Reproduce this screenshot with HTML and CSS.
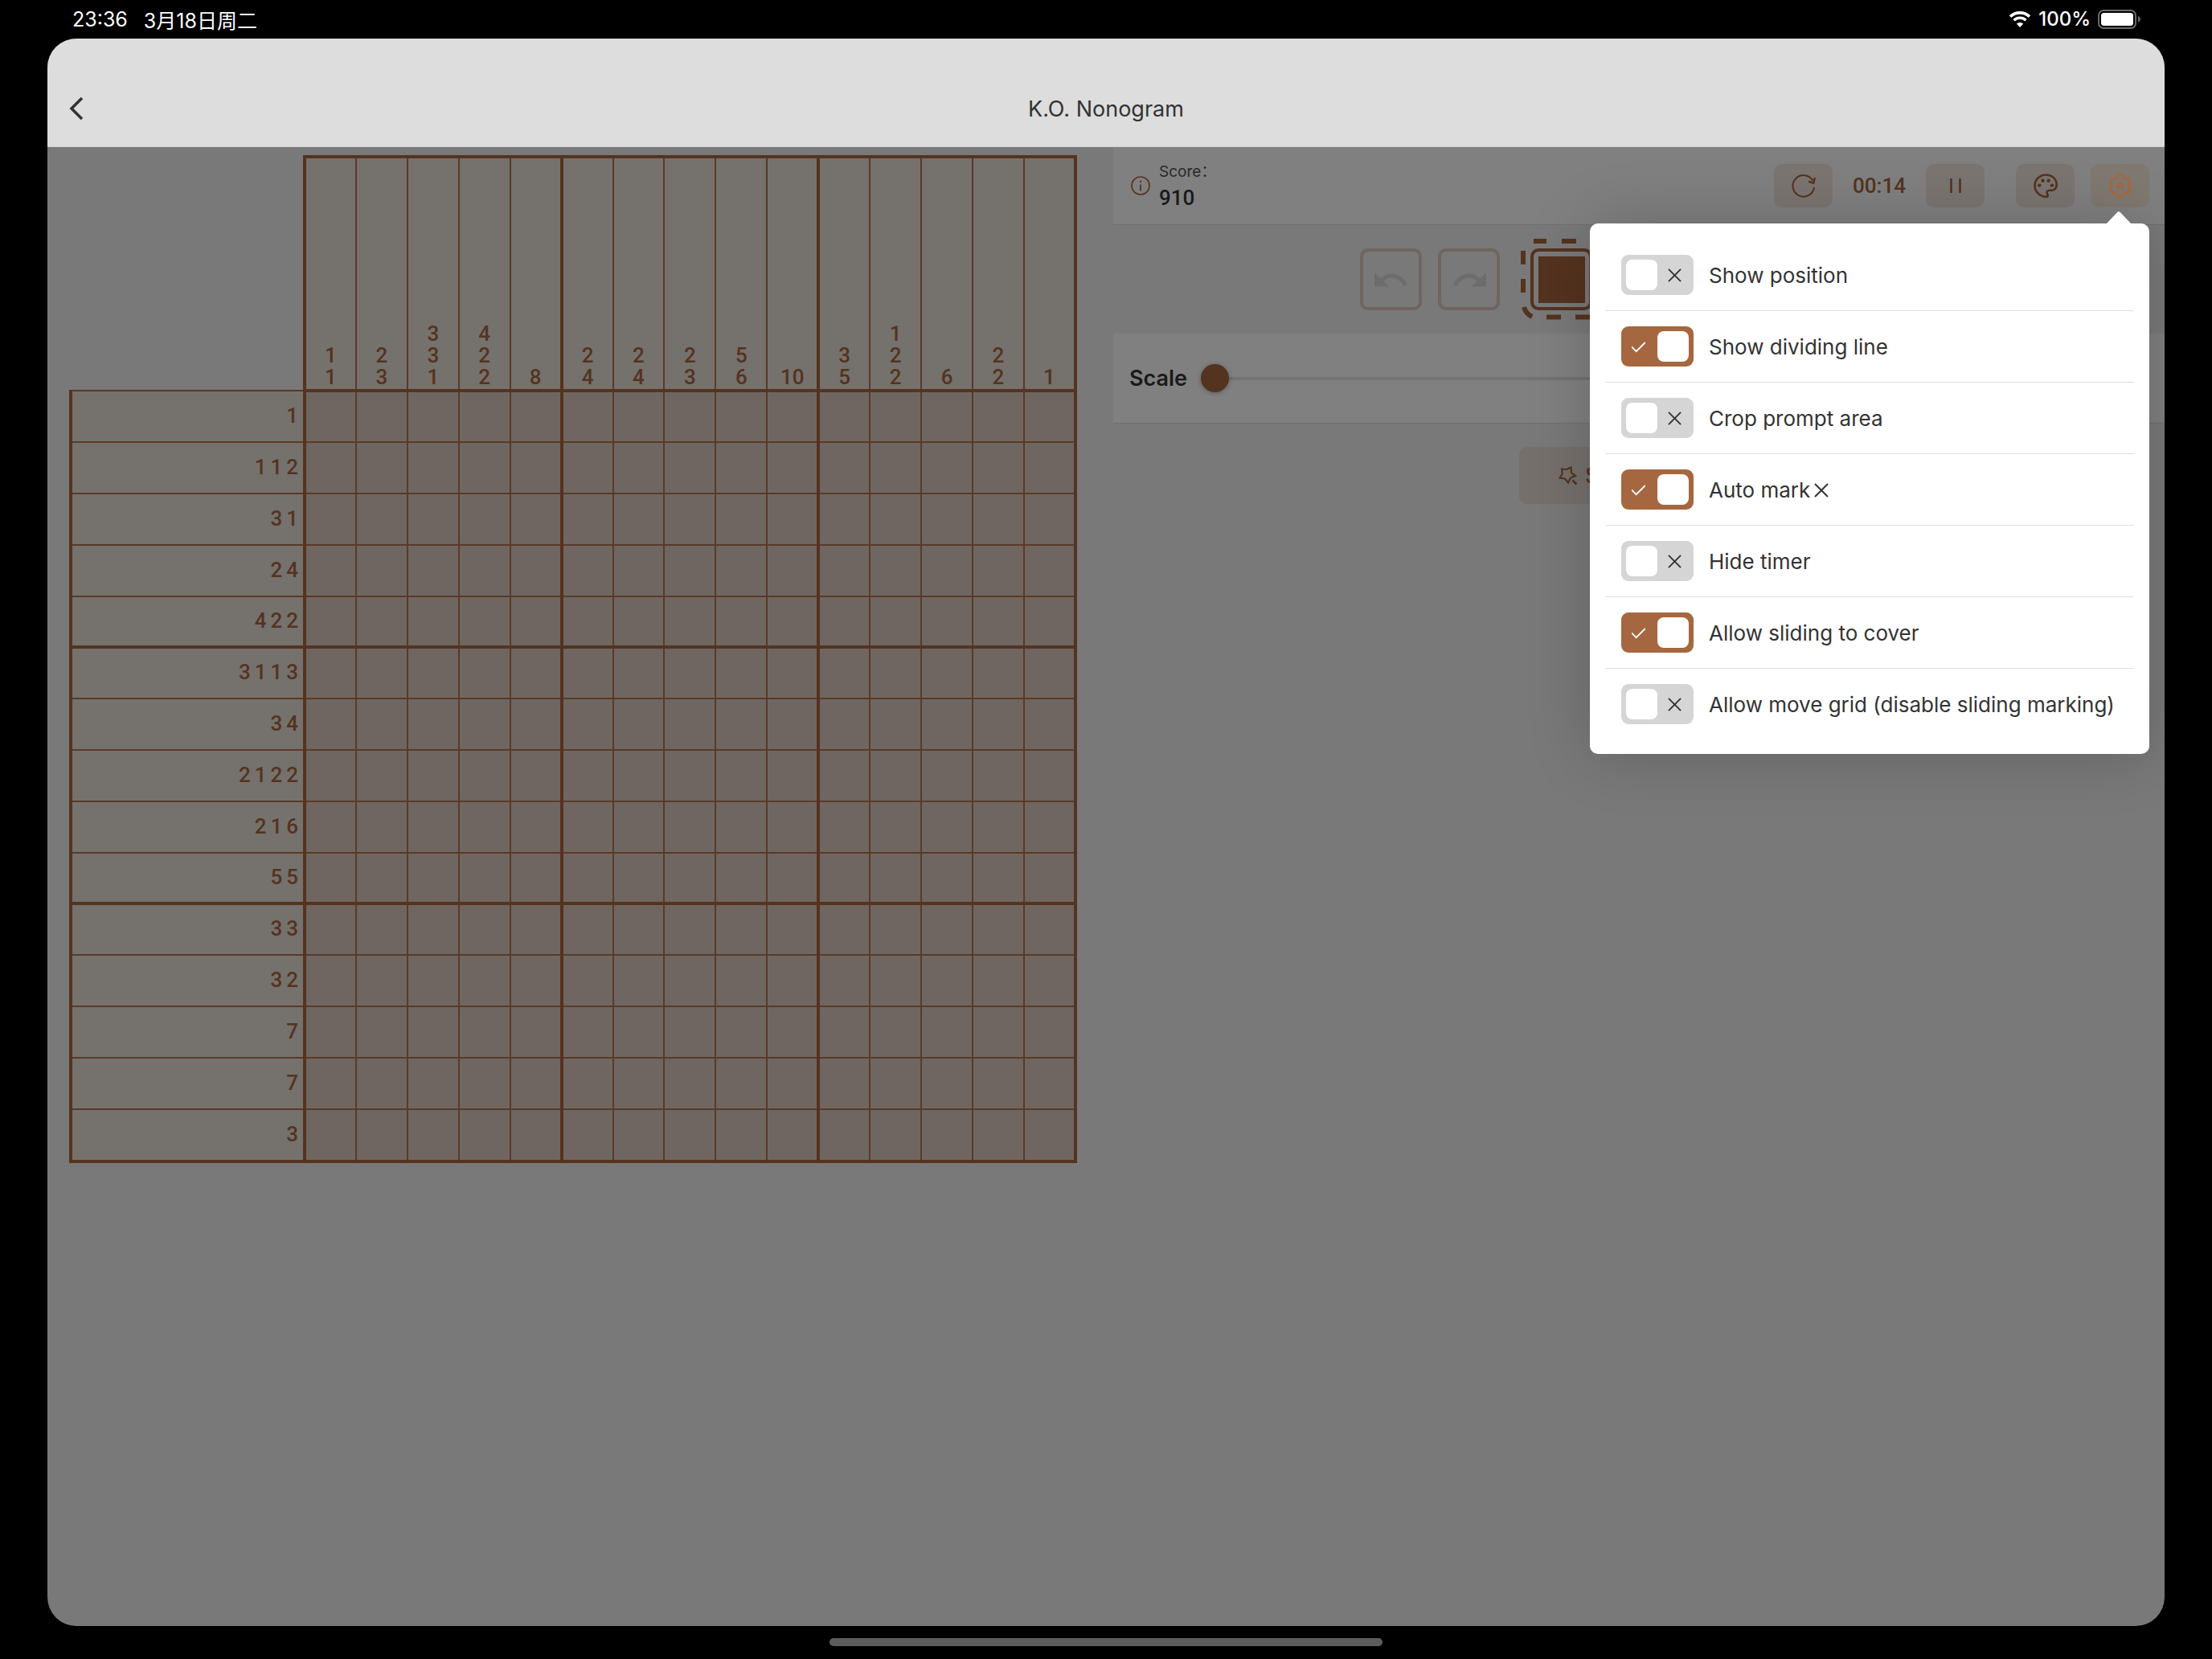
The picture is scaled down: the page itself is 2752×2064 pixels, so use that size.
FILE: index.html
```html
<!DOCTYPE html>
<html lang="en">
<head>
<meta charset="utf-8">
<meta name="viewport" content="width=device-width, initial-scale=1">
<title>K.O. Nonogram</title>
<link rel="stylesheet" href="styles.css">
</head>
<body>
<div class="status-bar">
  <div class="status-group status-time"><span>23:36</span><span>3月18日周二</span></div>
  <div class="status-group">
    <svg class="wifi" viewBox="0 0 28 20" aria-hidden="true">
      <path d="M2 6.600A17.500 17.500 0 0 1 26 6.600" fill="none" stroke="#fff" stroke-width="3.600"/>
      <path d="M6.500 11.200A11 11 0 0 1 21.500 11.200" fill="none" stroke="#fff" stroke-width="3.600"/>
      <path d="M14 20L9.800 15.600A6 6 0 0 1 18.200 15.600Z" fill="#fff"/>
    </svg>
    <span>100%</span>
    <svg class="battery" viewBox="0 0 54 24" aria-hidden="true">
      <rect x="1" y="1" width="46" height="22" rx="6" fill="none" stroke="#6b6b6b" stroke-width="2"/>
      <rect x="4" y="4" width="40" height="16" rx="3.500" fill="#fff"/>
      <path d="M50 8Q53 9.500 53 12Q53 14.500 50 16Z" fill="#6b6b6b"/>
    </svg>
  </div>
</div>

<div class="app">
  <header class="nav">
    <button class="back" type="button" aria-label="Back">
      <svg viewBox="0 0 20 30" aria-hidden="true"><path d="M17 2L4 15L17 28" fill="none" stroke="#333" stroke-width="3.600"/></svg>
    </button>
    <h1 class="title">K.O. Nonogram</h1>
  </header>

  <main class="content">
    <section class="board-pane">
      <table class="board" id="board" aria-label="Puzzle"></table>
    </section>

    <section class="side">
      <div class="score-bar">
        <svg class="info" viewBox="0 0 24 24" aria-hidden="true" fill="none" stroke="#573620" stroke-width="1.700"><circle cx="12" cy="12" r="11"/><path d="M12 10.500V18.500" stroke-width="1.800"/><path d="M12 5.800V8" stroke-width="2"/></svg>
        <div class="score"><span class="score-label">Score：</span><span class="score-value">910</span></div>
        <button class="tool" type="button" aria-label="Restart">
          <svg viewBox="0 0 32 32" aria-hidden="true" fill="none" stroke="#54331f" stroke-width="2"><path d="M29 18A13.300 13.300 0 1 1 27.500 10"/><path d="M30 6L28.300 12.700L22 10.800" stroke-width="2.400"/></svg>
        </button>
        <span class="timer">00:14</span>
        <button class="tool" type="button" aria-label="Pause">
          <svg viewBox="0 0 32 32" aria-hidden="true" fill="none" stroke="#54331f" stroke-width="2.600"><path d="M10.500 7V25M21.500 7V25"/></svg>
        </button>
        <button class="tool tool-palette" type="button" aria-label="Theme">
          <svg viewBox="0 0 32 32" aria-hidden="true"><path d="M18.300 29.600C10 30.600 2.500 24 2.500 16C2.500 8.500 8.800 2.500 16.300 2.500C23.500 2.500 29.700 7.500 29.700 14.500C29.700 20 26 22.300 22 21.800C18.500 21.600 16.600 23.500 18 26C18.800 27.500 19 28.800 18.300 29.600Z" fill="none" stroke="#54331f" stroke-width="2.600"/><g fill="#54331f"><circle cx="8.300" cy="15.600" r="2.200"/><circle cx="12.500" cy="9.700" r="2.200"/><circle cx="19.600" cy="9.700" r="2.200"/><circle cx="24" cy="15.600" r="2.200"/></g></svg>
        </button>
        <div class="settings">
          <button class="tool tool-active" type="button" aria-label="Settings" aria-expanded="true">
            <svg viewBox="0 0 32 32" aria-hidden="true" fill="none" stroke="#a8683f" stroke-width="2.600" stroke-linejoin="round"><path d="M13 2.800H19Q19.600 6.300 21.100 7.200Q22.500 8 25.700 6.900L28.700 12.100Q26.200 14.300 26.200 16Q26.200 17.700 28.700 19.900L25.700 25.100Q22.500 24 21.100 24.800Q19.600 25.700 19 29.200H13Q12.400 25.700 10.900 24.800Q9.500 24 6.300 25.100L3.300 19.900Q5.800 17.700 5.800 16Q5.800 14.300 3.300 12.100L6.300 6.900Q9.500 8 10.900 7.200Q12.400 6.300 13 2.800Z"/><circle cx="16" cy="16" r="3.200"/></svg>
          </button>
          <div class="popover" role="dialog" aria-label="Settings">
            <label class="option"><span class="toggle"><input type="checkbox"><svg viewBox="0 0 18 18" aria-hidden="true"><path d="M1 1L17 17M17 1L1 17"/></svg></span><span>Show position</span></label>
            <label class="option"><span class="toggle"><input type="checkbox" checked><svg viewBox="0 0 18 18" aria-hidden="true"><path d="M0 9L6 15L18 3"/></svg></span><span>Show dividing line</span></label>
            <label class="option"><span class="toggle"><input type="checkbox"><svg viewBox="0 0 18 18" aria-hidden="true"><path d="M1 1L17 17M17 1L1 17"/></svg></span><span>Crop prompt area</span></label>
            <label class="option"><span class="toggle"><input type="checkbox" checked><svg viewBox="0 0 18 18" aria-hidden="true"><path d="M0 9L6 15L18 3"/></svg></span><span>Auto mark<svg class="cross" viewBox="0 0 18 18" aria-hidden="true"><path d="M1 1L17 17M17 1L1 17"/></svg></span></label>
            <label class="option"><span class="toggle"><input type="checkbox"><svg viewBox="0 0 18 18" aria-hidden="true"><path d="M1 1L17 17M17 1L1 17"/></svg></span><span>Hide timer</span></label>
            <label class="option"><span class="toggle"><input type="checkbox" checked><svg viewBox="0 0 18 18" aria-hidden="true"><path d="M0 9L6 15L18 3"/></svg></span><span>Allow sliding to cover</span></label>
            <label class="option"><span class="toggle"><input type="checkbox"><svg viewBox="0 0 18 18" aria-hidden="true"><path d="M1 1L17 17M17 1L1 17"/></svg></span><span>Allow move grid (disable sliding marking)</span></label>
          </div>
        </div>
      </div>

      <div class="pens">
        <button class="pen" type="button" aria-label="Undo" disabled>
          <svg viewBox="0 0 42 20" aria-hidden="true" fill="#6c6c6c"><path d="M0 1L7.500 8.500Q13 2.500 21 2.500Q35 3 41 16.500L36.500 18Q31.500 8 21 7.500Q15 7.500 11.500 12L18 18.500H0Z"/></svg>
        </button>
        <button class="pen" type="button" aria-label="Redo" disabled>
          <svg viewBox="0 0 42 20" aria-hidden="true" fill="#6c6c6c"><path d="M42 1L34.500 8.500Q29 2.500 21 2.500Q7 3 1 16.500L5.500 18Q10.500 8 21 7.500Q27 7.500 30.500 12L24 18.500H42Z"/></svg>
        </button>
        <button class="pen pen-selected" type="button" aria-label="Fill" aria-pressed="true">
          <span class="swatch"></span>
          <svg class="ants" viewBox="0 0 101 101" aria-hidden="true" fill="none" stroke="#54331f" stroke-width="6"><path d="M3 32V15M3 67V50M16 3Q20 3 32 3M51 3H69M14 97Q6 93 4 85M32 97.500H50M68 97.500H86"/></svg>
        </button>
      </div>

      <div class="scale-bar">
        <label for="scale">Scale</label>
        <input class="scale" id="scale" type="range" min="0" max="100" value="0">
      </div>

      <button class="hint" type="button">
        <svg viewBox="0 0 24 24" aria-hidden="true" fill="none" stroke="#54331f" stroke-width="2.200"><path d="M4 3.500L10 4L15.500 1.500L16 8L21 12L15 14.500L12 20.500L8 15.500L1.500 14.700L4.800 9.500Z"/><path d="M17.500 17.500L22.500 22.500" stroke-width="2.600"/></svg>
        <span>Show hint</span>
      </button>
    </section>
  </main>
</div>

<div class="home-indicator"></div>
<script src="board.js"></script>
</body>
</html>
```

FILE: styles.css
```css
* {
  box-sizing: border-box;
}

body {
  margin: 0;
  min-height: 100vh;
  display: flex;
  flex-direction: column;
  background: #000;
  color: #333;
  font-family: Inter, "Noto Sans CJK SC", sans-serif;
  font-size: 27px;
}

button {
  border: 0;
  padding: 0;
  background: none;
  color: inherit;
  font: inherit;
}

svg {
  display: block;
}

/* Status bar */

.status-bar {
  height: 48px;
  padding: 0 88px 1px 90px;
  display: flex;
  align-items: center;
  justify-content: space-between;
  color: #fff;
  font-size: 24px;
  font-weight: 500;
}

.status-group {
  display: flex;
  align-items: center;
  gap: 9px;
}

.status-time {
  gap: 20px;
  font-size: 25px;
  font-weight: 400;
}

.wifi {
  width: 28px;
  height: 20px;
}

.battery {
  width: 54px;
  height: 24px;
}

/* Window */

.app {
  flex: 1;
  display: flex;
  flex-direction: column;
  margin: 0 59px;
  border-radius: 36px;
  overflow: hidden;
  background: #797979;
}

.nav {
  height: 135px;
  padding: 40px 26px 0;
  display: grid;
  grid-template-columns: 48px 1fr 48px;
  align-items: center;
  background: #ddd;
  border-bottom: 1px solid #d0d3d0;
}

.back svg {
  width: 20px;
  height: 30px;
}

.title {
  margin: 0;
  text-align: center;
  font-size: 27px;
  font-weight: 400;
}

.content {
  flex: 1;
  display: grid;
  grid-template-columns: 1326fr 1308fr;
}

/* Board */

.board-pane {
  padding: 10px 45px 0 27px;
}

.board {
  width: 100%;
  table-layout: fixed;
  border-collapse: collapse;
  color: #54331f;
  font-family: Roboto, sans-serif;
  font-size: 26px;
  font-weight: 500;
}

.board .clue-col {
  width: 291px;
}

.board td,
.board th {
  height: 64px;
  padding: 0;
  border: 2px solid #593a27;
  background: #6f6661;
  font-weight: inherit;
}

.board .corner {
  border-top: 0;
  border-left: 0;
  border-right: 4px solid #54331f;
  background: none;
}

.board .col-clue {
  height: 291px;
  border-top: 4px solid #54331f;
  border-bottom: 4px solid #54331f;
  background: #75716d;
  vertical-align: bottom;
}

.board .row-clue {
  border-left: 4px solid #54331f;
  border-right: 4px solid #54331f;
  background: #75716d;
}

.board .group-right {
  border-right: 4px solid #54331f;
}

.board .group-bottom td,
.board .group-bottom th {
  height: 63px;
  border-bottom: 4px solid #54331f;
}

.board .group-bottom:last-child th {
  height: 65px;
}

.stack {
  display: flex;
  flex-direction: column;
  align-items: center;
  padding-bottom: 1px;
  line-height: 27px;
}

.run {
  display: flex;
  justify-content: flex-end;
  gap: 5px;
  padding: 0 6px 2px 0;
  line-height: 27px;
}

/* Side panel */

.score-bar {
  height: 97px;
  padding: 0 19px 0 22px;
  display: flex;
  align-items: center;
  background: #808080;
  border-bottom: 1px solid #6f6f6f;
}

.info {
  width: 24px;
  height: 24px;
}

.score {
  flex: 1;
  display: flex;
  flex-direction: column;
  padding: 0 0 3px 11px;
  color: #1a1a1a;
}

.score-label {
  line-height: 32px;
  font-size: 19px;
  color: #2a2a2a;
}

.score-value {
  line-height: 32px;
  font-family: Roboto, sans-serif;
  font-size: 26px;
  font-weight: 500;
}

.tool {
  width: 73px;
  height: 54px;
  display: grid;
  place-items: center;
  border-radius: 10px;
  background: #7b7571;
}

.tool svg {
  width: 32px;
  height: 32px;
}

.tool-active {
  background: #807972;
}

.tool-palette {
  margin: 0 20px 0 39px;
}

.timer {
  width: 116px;
  text-align: center;
  color: #54331f;
  font-family: Roboto, sans-serif;
  font-size: 26px;
  font-weight: 500;
}

.pens {
  height: 135px;
  padding-left: 307px;
  display: flex;
  align-items: center;
  gap: 20px;
}

.pen {
  flex: none;
  width: 77px;
  height: 77px;
  display: grid;
  place-items: center;
  border: 4px solid #6f655f;
  border-radius: 10px;
}

.pen svg {
  width: 42px;
  height: 20px;
}

.pen-selected {
  position: relative;
  margin-left: 18px;
  border-color: #54331f;
}

.swatch {
  width: 58px;
  height: 58px;
  background: #54331f;
}

.pen .ants {
  position: absolute;
  top: -16px;
  left: -16px;
  width: 101px;
  height: 101px;
}

.scale-bar {
  height: 112px;
  padding: 0 20px;
  display: flex;
  align-items: center;
  gap: 17px;
  background: #808080;
  border-bottom: 1px solid #6f6f6f;
  color: #1a1a1a;
  font-weight: 600;
}

.scale {
  flex: 1;
  height: 36px;
  margin: 0;
  appearance: none;
  background: none;
}

.scale::-webkit-slider-runnable-track {
  height: 4px;
  background: #727272;
}

.scale::-webkit-slider-thumb {
  appearance: none;
  width: 35px;
  height: 35px;
  margin-top: -16px;
  border-radius: 50%;
  background: #54331f;
  box-shadow: 0 1px 6px rgba(0, 0, 0, 0.3);
}

.hint {
  width: 298px;
  height: 71px;
  margin: 29px auto 0;
  padding-left: 49px;
  display: flex;
  align-items: center;
  gap: 9px;
  border-radius: 10px;
  background: #75706c;
  color: #54331f;
  font-weight: 500;
}

.hint svg {
  width: 24px;
  height: 24px;
}

/* Settings popover */

.settings {
  position: relative;
}

.popover {
  position: absolute;
  z-index: 1;
  top: 74px;
  right: 0;
  width: 696px;
  padding: 20px 19px 18px;
  border-radius: 10px;
  background: #fff;
  box-shadow: 0 0 80px rgba(0, 0, 0, 0.2);
  font-size: 26px;
}

.popover::before {
  content: "";
  position: absolute;
  top: -15px;
  right: 22px;
  width: 32px;
  height: 16px;
  background: #fff;
  clip-path: polygon(0 100%, 44% 8%, 50% 0, 56% 8%, 100% 100%);
}

.option {
  height: 89px;
  padding-left: 20px;
  display: flex;
  align-items: center;
  gap: 19px;
  border-bottom: 1px solid #e0e0e0;
  white-space: nowrap;
}

.option:last-child {
  height: 88px;
  border-bottom: 0;
}

.toggle {
  display: grid;
  align-items: center;
}

.toggle input,
.toggle svg {
  grid-area: 1 / 1;
}

.toggle input {
  width: 90px;
  height: 50px;
  margin: 0;
  padding: 6px;
  display: flex;
  appearance: none;
  border-radius: 9px;
  background: #d5d5d5;
}

.toggle input::before {
  content: "";
  width: 39px;
  height: 38px;
  border-radius: 8px;
  background: #fff;
}

.toggle input:checked {
  justify-content: flex-end;
  background: #a5673f;
}

.toggle svg {
  width: 17px;
  height: 17px;
  justify-self: end;
  margin-right: 15px;
  fill: none;
  stroke: #333;
  stroke-width: 2;
}

.toggle input:checked + svg {
  justify-self: start;
  margin: 0 0 0 13px;
  stroke: #fff;
}

.cross {
  display: inline-block;
  width: 18px;
  height: 18px;
  margin-left: 5px;
  fill: none;
  stroke: #333;
  stroke-width: 2;
}

/* Home indicator */

.home-indicator {
  width: 25%;
  height: 10px;
  margin: 15px auto 16px;
  border-radius: 5px;
  background: #5c5c5c;
}
```

FILE: board.js
```js
const columns = [
  [1, 1], [2, 3], [3, 3, 1], [4, 2, 2], [8],
  [2, 4], [2, 4], [2, 3], [5, 6], [10],
  [3, 5], [1, 2, 2], [6], [2, 2], [1],
];
const rows = [
  [1], [1, 1, 2], [3, 1], [2, 4], [4, 2, 2],
  [3, 1, 1, 3], [3, 4], [2, 1, 2, 2], [2, 1, 6], [5, 5],
  [3, 3], [3, 2], [7], [7], [3],
];

const spans = (clue) => clue.map((n) => `<span>${n}</span>`).join("");
const group = (i) => (i % 5 === 4 ? " group-right" : "");

const head = columns
  .map((clue, i) => `<th scope="col" class="col-clue${group(i)}"><div class="stack">${spans(clue)}</div></th>`)
  .join("");

const body = rows
  .map((clue, r) => {
    const cells = columns.map((_, i) => `<td class="cell${group(i)}"></td>`).join("");
    const cls = r % 5 === 4 ? "group-bottom" : "";
    return `<tr class="${cls}"><th scope="row" class="row-clue"><div class="run">${spans(clue)}</div></th>${cells}</tr>`;
  })
  .join("");

document.getElementById("board").innerHTML =
  `<colgroup><col class="clue-col"></colgroup><thead><tr><td class="corner"></td>${head}</tr></thead><tbody>${body}</tbody>`;
```
